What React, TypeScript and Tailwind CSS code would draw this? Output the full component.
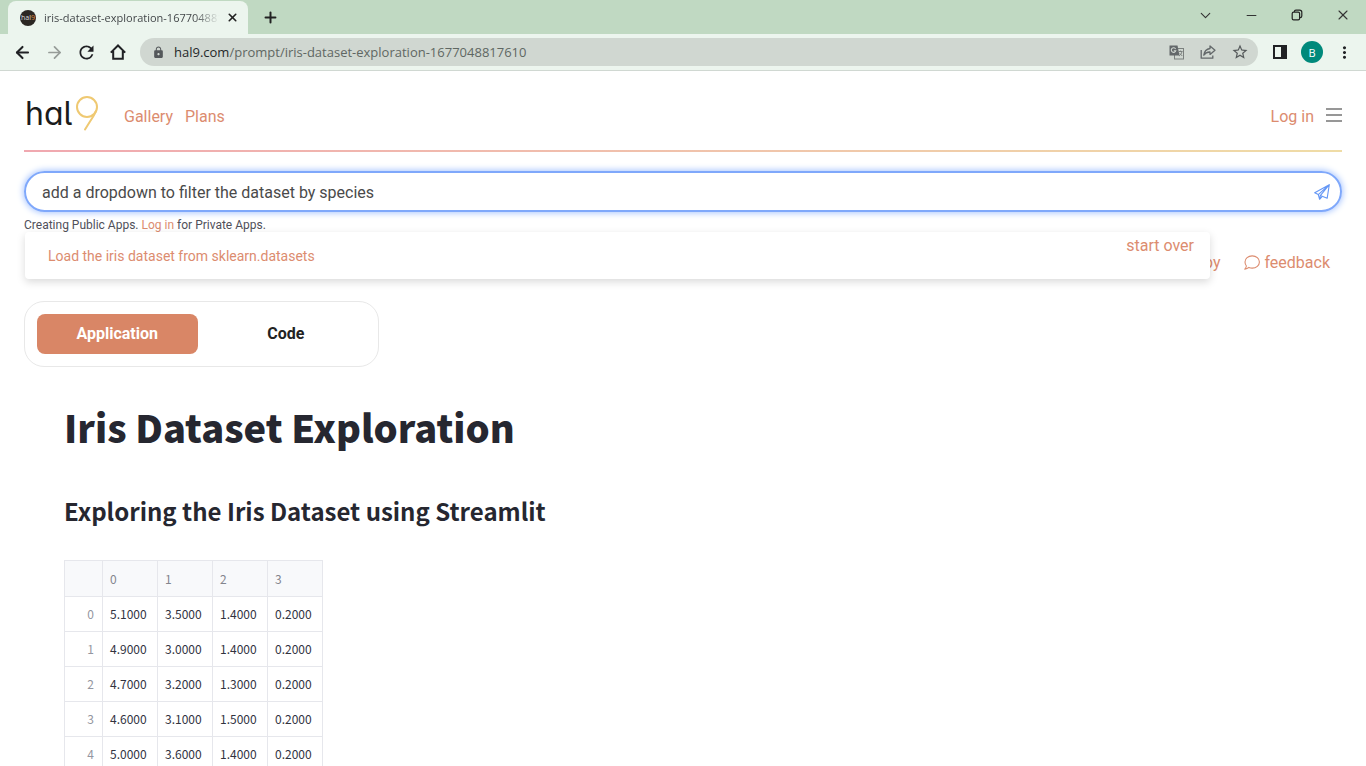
import type { ReactNode } from "react";
import { ArrowLeft, ArrowRight, ChevronDown, Minus, Plus, X } from "lucide-react";
import { MdLock, MdMoreVert, MdRefresh, MdStarBorder } from "react-icons/md";

const rows = [
  ["5.1000", "3.5000", "1.4000", "0.2000"],
  ["4.9000", "3.0000", "1.4000", "0.2000"],
  ["4.7000", "3.2000", "1.3000", "0.2000"],
  ["4.6000", "3.1000", "1.5000", "0.2000"],
  ["5.0000", "3.6000", "1.4000", "0.2000"],
];

function ToolButton({ label, children }: { label: string; children: ReactNode }) {
  return (
    <button
      type="button"
      aria-label={label}
      className="flex h-7 w-8 shrink-0 items-center justify-center"
    >
      {children}
    </button>
  );
}

function WindowButton({ label, children }: { label: string; children: ReactNode }) {
  return (
    <button
      type="button"
      aria-label={label}
      className="flex h-[30px] w-[46px] items-center justify-center text-[#333]"
    >
      {children}
    </button>
  );
}

function BrowserChrome() {
  return (
    <div className="shrink-0 font-['Open_Sans',sans-serif]">
      <div className="flex h-[34px] items-end bg-[#c0d9c2] pl-2">
        <div className="flex h-[33px] w-60 items-center rounded-t-lg bg-[#ecf5ee] pr-2 pl-3">
          <span className="flex size-4 shrink-0 items-center justify-center rounded-full bg-[#2b2723] text-[7px] leading-none text-[#ddd]">
            hal<span className="text-[#e08a3c]">9</span>
          </span>
          <span className="ml-2 flex-1 overflow-hidden bg-linear-to-r from-[#3c4043] from-85% to-transparent bg-clip-text text-[11px] leading-4 whitespace-nowrap text-transparent">
            iris-dataset-exploration-1677048817610
          </span>
          <button type="button" aria-label="Close tab" className="ml-1 flex size-4 items-center justify-center">
            <X size={13} strokeWidth={3} color="#222" />
          </button>
        </div>
        <button type="button" aria-label="New tab" className="flex h-[33px] w-11 items-center justify-center">
          <Plus size={17} strokeWidth={2.8} color="#222" />
        </button>
        <div className="ml-auto flex h-full items-start">
          <WindowButton label="Search tabs">
            <ChevronDown size={17} strokeWidth={1.6} />
          </WindowButton>
          <WindowButton label="Minimize">
            <Minus size={15} strokeWidth={1.8} />
          </WindowButton>
          <WindowButton label="Restore">
            <svg width="12" height="12" viewBox="0 0 12 12" fill="none" stroke="#222" strokeWidth="1.2">
              <rect x="1.2" y="3.2" width="7.4" height="7.6" rx="1.4" />
              <path d="M3.4 3V2.6C3.4 1.7 4 1.1 4.9 1.1H8.6C9.9 1.1 10.8 2 10.8 3.3V7C10.8 7.9 10.2 8.7 9 8.7" />
            </svg>
          </WindowButton>
          <WindowButton label="Close window">
            <X size={16} strokeWidth={1.6} />
          </WindowButton>
        </div>
      </div>
      <div className="flex h-[37px] items-center border-b border-[#d0d8d2] bg-[#ecf5ee] px-1.5 text-[#202124]">
        <ToolButton label="Back">
          <ArrowLeft size={19} strokeWidth={2.6} />
        </ToolButton>
        <ToolButton label="Forward">
          <ArrowRight size={19} strokeWidth={2.2} color="#969c98" />
        </ToolButton>
        <ToolButton label="Reload">
          <MdRefresh size={21} />
        </ToolButton>
        <ToolButton label="Home">
          <svg width="16" height="16" viewBox="0 0 16 16" fill="none" stroke="currentColor" strokeWidth="2">
            <path d="M0.8 8.6L8 1.5L15.2 8.6M3.2 7V14.7H12.8V7" />
          </svg>
        </ToolButton>
        <div className="ml-1.5 flex h-7 flex-1 items-center rounded-full bg-[#d0d7d1] pr-0.5 pl-3 text-[#5f6368]">
          <MdLock size={13} color="#54585b" />
          <a href="#top" className="ml-2 flex-1 pl-px text-[13px] leading-5 text-[#5f6763]">
            <span className="text-[#25282a]">hal9.com</span>/prompt/iris-dataset-exploration-1677048817610
          </a>
          <ToolButton label="Translate">
            <svg width="15" height="15" viewBox="0 0 15 15" fill="none">
              <rect x="5.5" y="3.5" width="9" height="10.5" stroke="#7b807e" />
              <path d="M0.5 0.5H8.5L10.5 10.5H0.5Z" fill="#63686a" />
              <path d="M6.6 3.9A2.3 2.3 0 1 0 6.8 5.7H4.8" stroke="#d0d7d1" strokeWidth="1.1" />
              <path d="M9.5 6.5H13.5M11.6 5.5V6.5M13 6.5C12.5 8.5 11.5 10 10 11M10.8 8.5L13.3 11" stroke="#7b807e" />
            </svg>
          </ToolButton>
          <ToolButton label="Share">
            <svg width="16" height="16" viewBox="0 0 16 16" fill="none" stroke="#63686a" strokeWidth="1.3" strokeLinejoin="round">
              <path d="M1.2 6V14.2H12.8V11.5" />
              <path d="M10 2L15 6.2L10 10.4V8C7 7.9 5.2 9 3.8 11.2C4.3 7.6 6.3 5 10 4.5Z" />
            </svg>
          </ToolButton>
          <ToolButton label="Bookmark">
            <MdStarBorder size={18} color="#55595b" />
          </ToolButton>
        </div>
        <div className="ml-1.5 flex items-center">
          <ToolButton label="Side panel">
            <svg width="14" height="14" viewBox="0 0 14 14" fill="none">
              <rect x="1" y="1" width="12" height="12" stroke="#202124" strokeWidth="2" />
              <rect x="8" y="1" width="5" height="12" fill="#202124" />
            </svg>
          </ToolButton>
          <ToolButton label="Profile">
            <span className="flex size-[22px] items-center justify-center rounded-full bg-[#00897b] text-[11px] leading-none text-white">
              B
            </span>
          </ToolButton>
          <ToolButton label="Menu">
            <MdMoreVert size={19} />
          </ToolButton>
        </div>
      </div>
    </div>
  );
}

function Logo() {
  return (
    <a href="#top" className="flex h-10 w-[76px] items-start text-[#1b1b1b]">
      <span className="w-[50px] pl-px font-['Inter',sans-serif] text-[32px] leading-[38px] font-normal whitespace-nowrap [font-feature-settings:'cv11','cv05']">
        hal
      </span>
      <svg
        className="shrink-0"
        width="26"
        height="38"
        viewBox="0 0 26 38"
        fill="none"
        stroke="#efc972"
        strokeWidth="2"
        strokeLinecap="round"
        aria-hidden="true"
      >
        <circle cx="13" cy="12" r="10" />
        <path d="M22 16C21 19 18 23.500 16 26.500L11 34.500" />
      </svg>
    </a>
  );
}

export default function App() {
  return (
    <div id="top" className="flex h-screen flex-col overflow-hidden bg-white">
      <BrowserChrome />
      <main className="min-h-0 flex-1 overflow-hidden px-6 font-['Roboto',sans-serif] text-[16px] leading-6 text-[#444]">
        <header className="flex h-[79px] items-center pt-2">
          <Logo />
          <nav className="ml-6 flex gap-3 pt-1 text-[#dc8c6f]">
            <a href="#gallery">Gallery</a>
            <a href="#plans">Plans</a>
          </nav>
          <div className="ml-auto flex items-center gap-3 pt-1">
            <a href="#login" className="text-[#dc8c6f]">
              Log in
            </a>
            <button type="button" aria-label="Open menu" className="mb-1 flex h-3.5 w-4 flex-col justify-between">
              <span className="h-0.5 w-full bg-[#979797]" />
              <span className="h-0.5 w-full bg-[#979797]" />
              <span className="h-0.5 w-full bg-[#979797]" />
            </button>
          </div>
        </header>
        <div className="h-0.5 bg-linear-to-r from-[#f0a8b0] to-[#efdca6]" />

        <section className="relative mt-[19px]">
          <form className="flex h-[41px] items-center rounded-full border-2 border-[#7fa8fb] pr-2.5 pl-4 shadow-[0_0_6px_1px_#a9c6ff]">
            <input
              type="text"
              aria-label="Prompt"
              defaultValue="add a dropdown to filter the dataset by species"
              className="h-9 min-w-0 flex-1 bg-transparent pt-px text-[#4a4a4a] outline-none"
            />
            <button type="button" aria-label="Send">
              <svg width="16" height="16" viewBox="0 0 16 16" fill="none" stroke="#6597f5" strokeWidth="1.1" strokeLinejoin="round">
                <path d="M15.3 0.7L0.7 8.8L4.3 10.6L15.3 0.7L6.3 11.6L13.2 14.2L15.3 0.7Z" />
                <path d="M4.3 10.6L5.6 15.3L8.3 12.4M6.3 11.6L5.6 15.3" />
              </svg>
            </button>
          </form>
          <p className="mt-1 text-[12px] leading-[18px] text-[#50505a]">
            Creating Public Apps.{" "}
            <a href="#login" className="text-[#dc8c6f]">
              Log in
            </a>{" "}
            for Private Apps.
          </p>
          <div className="absolute top-[61px] right-[132px] left-px z-10 flex h-[47px] items-center justify-between rounded-sm bg-white pr-4 pl-[23px] text-[#dc8c6f] shadow-[0_3px_9px_rgba(0,0,0,0.15)]">
            <a href="#load" className="text-[14px]">
              Load the iris dataset from sklearn.datasets
            </a>
            <button type="button" className="self-start pt-0.5">
              start over
            </button>
          </div>
        </section>

        <div className="mt-[17px] flex items-center justify-end gap-6 pr-3 text-[#dc8c6f]">
          <a href="#copy">copy</a>
          <a href="#feedback" className="flex items-center gap-1">
            <svg width="16" height="16" viewBox="0 0 16 16" fill="none" stroke="currentColor" strokeWidth="1.1" strokeLinejoin="round">
              <path d="M8.2 0.9C12.3 0.9 15.4 3.6 15.4 7S12.3 13.1 8.2 13.1C7 13.1 5.9 12.8 4.9 12.4C3.8 13.4 2.4 14 0.8 14.1C1.7 13.2 2.2 12.2 2.4 11C1.5 9.9 1 8.5 1 7C1 3.6 4.1 0.9 8.2 0.9Z" />
            </svg>
            feedback
          </a>
        </div>

        <div className="mt-[26px] grid w-[355px] grid-cols-2 gap-2 rounded-[20px] border border-[#e8e8e8] p-3 font-bold">
          <button type="button" className="h-10 rounded-lg bg-[#d98666] text-white">
            Application
          </button>
          <button type="button" className="h-10 rounded-lg text-[#222]">
            Code
          </button>
        </div>

        <article className="px-10 font-['Noto_Sans_CJK_SC',sans-serif] text-[#262730]">
          <h1 className="mt-[34px] text-[38px] leading-[52px] font-black">Iris Dataset Exploration</h1>
          <h2 className="mt-[42px] text-[24px] leading-8 font-bold">
            Exploring the Iris Dataset using Streamlit
          </h2>
          <table className="mt-[33px] table-fixed border-collapse border border-[#e6e7ec] text-[12px] leading-4">
            <thead>
              <tr className="h-9 bg-[#f8f9fb] text-left text-[#83858d]">
                <th className="w-[38px] border border-[#e6e7ec]" aria-label="Row" />
                {["0", "1", "2", "3"].map((name) => (
                  <th key={name} scope="col" className="w-[55px] border border-[#e6e7ec] px-[7px] font-normal">
                    {name}
                  </th>
                ))}
              </tr>
            </thead>
            <tbody>
              {rows.map((row, index) => (
                <tr key={index} className="h-[35px]">
                  <th scope="row" className="border border-[#e6e7ec] px-2 text-right font-normal text-[#9496a0]">
                    {index}
                  </th>
                  {row.map((value, column) => (
                    <td key={column} className="border border-[#e6e7ec] px-[7px] text-[#31333f]">
                      {value}
                    </td>
                  ))}
                </tr>
              ))}
            </tbody>
          </table>
        </article>
      </main>
    </div>
  );
}
